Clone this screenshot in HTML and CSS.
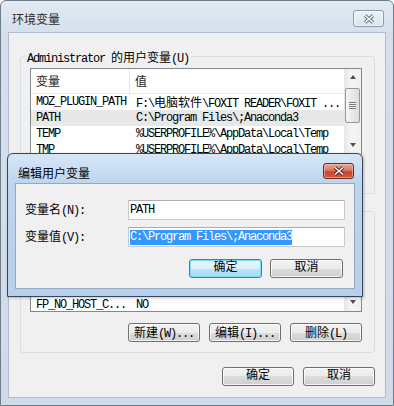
FILE: index.html
```html
<!DOCTYPE html>
<html lang="zh-CN">
<head>
  <meta charset="UTF-8" />
  <title>环境变量</title>
  <link rel="stylesheet" href="styles.css">
</head>
<body>
  <div class="window">
    <div class="titlebar">
      <span class="title zh">环境变量</span>
      <span class="close-btn inactive">
        <svg width="12" height="10" viewBox="0 0 12 10"><path d="M2 1.5 L10 8.5 M10 1.5 L2 8.5" stroke="#5d6b7a" stroke-width="3.4" fill="none"/><path d="M2 1.5 L10 8.5 M10 1.5 L2 8.5" stroke="#fff" stroke-width="1.6" fill="none"/></svg>
      </span>
    </div>

    <div class="client">
      <fieldset class="group">
        <legend>Administrator <span class="zh">的用户变量</span>(U)</legend>
        <div class="list user-list">
          <div class="list-main">
            <div class="list-head">
              <span class="h1 zh">变量</span>
              <span class="h2 zh">值</span>
            </div>
            <div class="row"><span class="c1">MOZ_PLUGIN_PATH</span><span class="c2">F:\<span class="zh">电脑软件</span>\FOXIT READER\FOXIT ...</span></div>
            <div class="row selected"><span class="c1">PATH</span><span class="c2">C:\Program Files\;Anaconda3</span></div>
            <div class="row"><span class="c1">TEMP</span><span class="c2">%USERPROFILE%\AppData\Local\Temp</span></div>
            <div class="row"><span class="c1">TMP</span><span class="c2">%USERPROFILE%\AppData\Local\Temp</span></div>
          </div>
          <div class="scrollbar">
            <div class="sb-btn"><span class="arrow up"></span></div>
            <div class="sb-track"><div class="thumb"><span class="grip"></span></div></div>
            <div class="sb-btn"><span class="arrow down"></span></div>
          </div>
        </div>
        <div class="btn-row">
          <button class="btn"><span class="zh">新建</span>(N)...</button>
          <button class="btn"><span class="zh">编辑</span>(E)...</button>
          <button class="btn"><span class="zh">删除</span>(D)</button>
        </div>
      </fieldset>

      <fieldset class="group system">
        <legend><span class="zh">系统变量</span>(S)</legend>
        <div class="list sys-list">
          <div class="list-main">
            <div class="list-head">
              <span class="h1 zh">变量</span>
              <span class="h2 zh">值</span>
            </div>
            <div class="row"><span class="c1">ANT_HOME</span><span class="c2">D:\apache-ant</span></div>
            <div class="row"><span class="c1">CLASSPATH</span><span class="c2">.;%JAVA_HOME%\lib</span></div>
            <div class="row"><span class="c1">ComSpec</span><span class="c2">C:\Windows\system32\cmd.exe</span></div>
            <div class="row"><span class="c1">FP_NO_HOST_C...</span><span class="c2">NO</span></div>
            <div class="row"><span class="c1">NUMBER_OF_PR...</span><span class="c2">4</span></div>
          </div>
          <div class="scrollbar">
            <div class="sb-btn"><span class="arrow up"></span></div>
            <div class="sb-track"><div class="thumb"><span class="grip"></span></div></div>
            <div class="sb-btn"><span class="arrow down"></span></div>
          </div>
        </div>
        <div class="btn-row">
          <button class="btn"><span class="zh">新建</span>(W)...</button>
          <button class="btn"><span class="zh">编辑</span>(I)...</button>
          <button class="btn"><span class="zh">删除</span>(L)</button>
        </div>
      </fieldset>

      <div class="btn-row footer">
        <button class="btn zh">确定</button>
        <button class="btn zh">取消</button>
      </div>
    </div>

    <!-- edit dialog on top of the main window -->
    <div class="dialog">
      <div class="titlebar dlg-titlebar">
        <span class="title zh">编辑用户变量</span>
        <span class="close-btn active">
          <svg width="12" height="10" viewBox="0 0 12 10"><path d="M2 1.5 L10 8.5 M10 1.5 L2 8.5" stroke="#5a1d14" stroke-width="3.4" fill="none"/><path d="M2 1.5 L10 8.5 M10 1.5 L2 8.5" stroke="#fff" stroke-width="1.6" fill="none"/></svg>
        </span>
      </div>
      <div class="dlg-client">
        <div class="form">
          <label><span class="zh">变量名</span>(N):</label>
          <div class="field">PATH</div>
          <label><span class="zh">变量值</span>(V):</label>
          <div class="field"><span class="sel">C:\Program Files\;Anaconda3</span></div>
        </div>
        <div class="btn-row dlg-buttons">
          <button class="btn default zh">确定</button>
          <button class="btn zh">取消</button>
        </div>
      </div>
    </div>
  </div>
</body>
</html>
```

FILE: styles.css
```css
* {
  box-sizing: border-box;
  margin: 0;
  padding: 0;
}

body {
  width: 394px;
  height: 406px;
  overflow: hidden;
  font-family: "Liberation Mono", "Noto Sans CJK SC", monospace;
  font-size: 12px;
  letter-spacing: -1.2px;
  color: #000;
  background: #fff;
}

.zh {
  font-family: "Noto Sans CJK SC", sans-serif;
  letter-spacing: 0;
}

/* main window */
.window {
  position: relative;
  width: 394px;
  height: 406px;
  border: 1px solid #6f7c8a;
  border-radius: 6px 6px 0 0;
  background: linear-gradient(180deg, #e2eaf3 0, #d5e0ec 31px, #cfdbe8 100%);
  padding: 0 7px 7px 7px;
  display: flex;
  flex-direction: column;
}

.titlebar {
  height: 31px;
  display: flex;
  align-items: flex-start;
  justify-content: space-between;
}

.titlebar .title {
  padding: 10px 0 0 4px;
  line-height: 16px;
  color: #2b2b2b;
}

.close-btn {
  width: 31px;
  height: 17px;
  margin-top: 9px;
  margin-right: 2px;
  border-radius: 3px;
  display: flex;
  align-items: center;
  justify-content: center;
}

.close-btn.inactive {
  border: 1px solid #8d9aa8;
  background: linear-gradient(180deg, #eef3f8, #d9e3ed);
  box-shadow: inset 0 0 0 1px rgba(255, 255, 255, 0.6);
}

.close-btn.active {
  height: 16px;
  border: 1px solid #6b2b20;
  background: linear-gradient(180deg, #eaa896 0, #d67a63 45%, #c8452d 55%, #d25b3f 100%);
  box-shadow: inset 0 0 0 1px rgba(255, 210, 200, 0.5);
}

.client {
  height: 367px;
  border: 1px solid #aebccb;
  background: #f0f0f0;
  padding: 17px 10px 0 11px;
}

/* group boxes */
.group {
  border: 1px solid #d5dfe5;
  border-radius: 3px;
  padding: 4px 12px 9px 9px;
  min-width: 0;
}

.group.system {
  margin-top: 11px;
  padding-bottom: 10px;
}

.group legend {
  line-height: 14px;
  height: 14px;
  padding: 0 2px;
  margin-left: -5px;
}

/* list views */
.list {
  display: flex;
  border: 1px solid #828790;
  background: #fff;
}

.user-list {
  height: 87px;
}

.sys-list {
  height: 89px;
}

.list-main {
  flex: 1;
  overflow: hidden;
}

.list-head {
  height: 25px;
  display: flex;
  align-items: center;
  border-bottom: 1px solid #e8eaed;
  color: #1c1c1c;
}

.h1 {
  width: 99px;
  height: 24px;
  line-height: 24px;
  padding-left: 5px;
  border-right: 1px solid #e3e6ea;
}

.h2 {
  padding-left: 5px;
  line-height: 24px;
}

.row {
  height: 16px;
  display: flex;
  align-items: center;
  white-space: nowrap;
}

.row.selected {
  background: #e8e8e8;
}

.c1 {
  width: 105px;
  padding-left: 5px;
  flex: none;
}

.c2 {
  white-space: nowrap;
}

/* scrollbar */
.scrollbar {
  width: 17px;
  display: flex;
  flex-direction: column;
  background: linear-gradient(90deg, #e6e6e6, #f5f5f5 40%, #f0f0f0);
}

.sb-btn {
  height: 17px;
  display: flex;
  align-items: center;
  justify-content: center;
}

.arrow {
  width: 0;
  height: 0;
  border-left: 3.5px solid transparent;
  border-right: 3.5px solid transparent;
}

.arrow.up {
  border-bottom: 4px solid #4f4f4f;
}

.arrow.down {
  border-top: 4px solid #4f4f4f;
}

.sb-track {
  flex: 1;
  padding: 2px 0 0 0;
}

.thumb {
  height: 35px;
  margin: 0 1px;
  border: 1px solid #979797;
  border-radius: 2px;
  background: linear-gradient(90deg, #f6f6f6, #e9e9e9 50%, #dcdcdc);
  display: flex;
  align-items: center;
  justify-content: center;
}

.grip {
  width: 7px;
  height: 7px;
  background: repeating-linear-gradient(180deg, #7a7a7a 0, #7a7a7a 1px, #f2f2f2 1px, #f2f2f2 2px);
}

/* buttons */
.btn-row {
  display: flex;
  justify-content: flex-end;
  gap: 9px;
  margin-top: 10px;
}

.group.system .btn-row {
  margin-top: 11px;
}

.btn-row.footer {
  margin-top: 14px;
}

.btn {
  width: 72px;
  height: 19px;
  border: 1px solid #707070;
  border-radius: 3px;
  background: linear-gradient(180deg, #f2f2f2 0, #ebebeb 50%, #dddddd 50%, #cfcfcf 100%);
  box-shadow: inset 0 0 0 1px rgba(255, 255, 255, 0.75);
  font: inherit;
  letter-spacing: inherit;
  line-height: 15px;
  color: #000;
}

.btn.zh {
  letter-spacing: 0;
}

.btn.default {
  border-color: #3c7fb1;
  background: linear-gradient(180deg, #eaf6fd 0, #d9f0fc 50%, #bee6fd 50%, #a7d9f5 100%);
  box-shadow: inset 0 0 0 1px #7fdcf5;
}

/* edit dialog */
.dialog {
  position: absolute;
  left: 6px;
  top: 152px;
  width: 356px;
  height: 144px;
  border: 1px solid #34475c;
  border-radius: 6px 6px 0 0;
  background: linear-gradient(180deg, #d6e6f6 0, #bed5ee 29px, #b6cfea 100%);
  padding: 0 7px 7px 7px;
  display: flex;
  flex-direction: column;
  box-shadow: 1px 1px 3px rgba(0, 0, 0, 0.25);
}

.dlg-titlebar {
  height: 29px;
}

.dlg-titlebar .title {
  padding: 11px 0 0 3px;
  color: #000;
}

.dlg-titlebar .close-btn {
  margin-right: 1px;
}

.dlg-client {
  flex: 1;
  border: 1px solid #95a8bd;
  background: #f0f0f0;
  padding: 16px 9px 0 9px;
}

.form {
  display: grid;
  grid-template-columns: 103px 217px;
  row-gap: 7px;
  align-items: center;
}

.form label {
  line-height: 16px;
}

.field {
  height: 20px;
  border: 1px solid #c6cbd2;
  border-top-color: #abadb3;
  background: #fff;
  padding: 1px 1px 0 1px;
  line-height: 16px;
  white-space: nowrap;
}

.sel {
  display: inline-block;
  background: #3399ff;
  color: #fff;
  line-height: 15px;
}

.dlg-buttons {
  margin-top: 12px;
  margin-right: 2px;
  gap: 8px;
}

.dlg-buttons .btn {
  width: 73px;
}
```
